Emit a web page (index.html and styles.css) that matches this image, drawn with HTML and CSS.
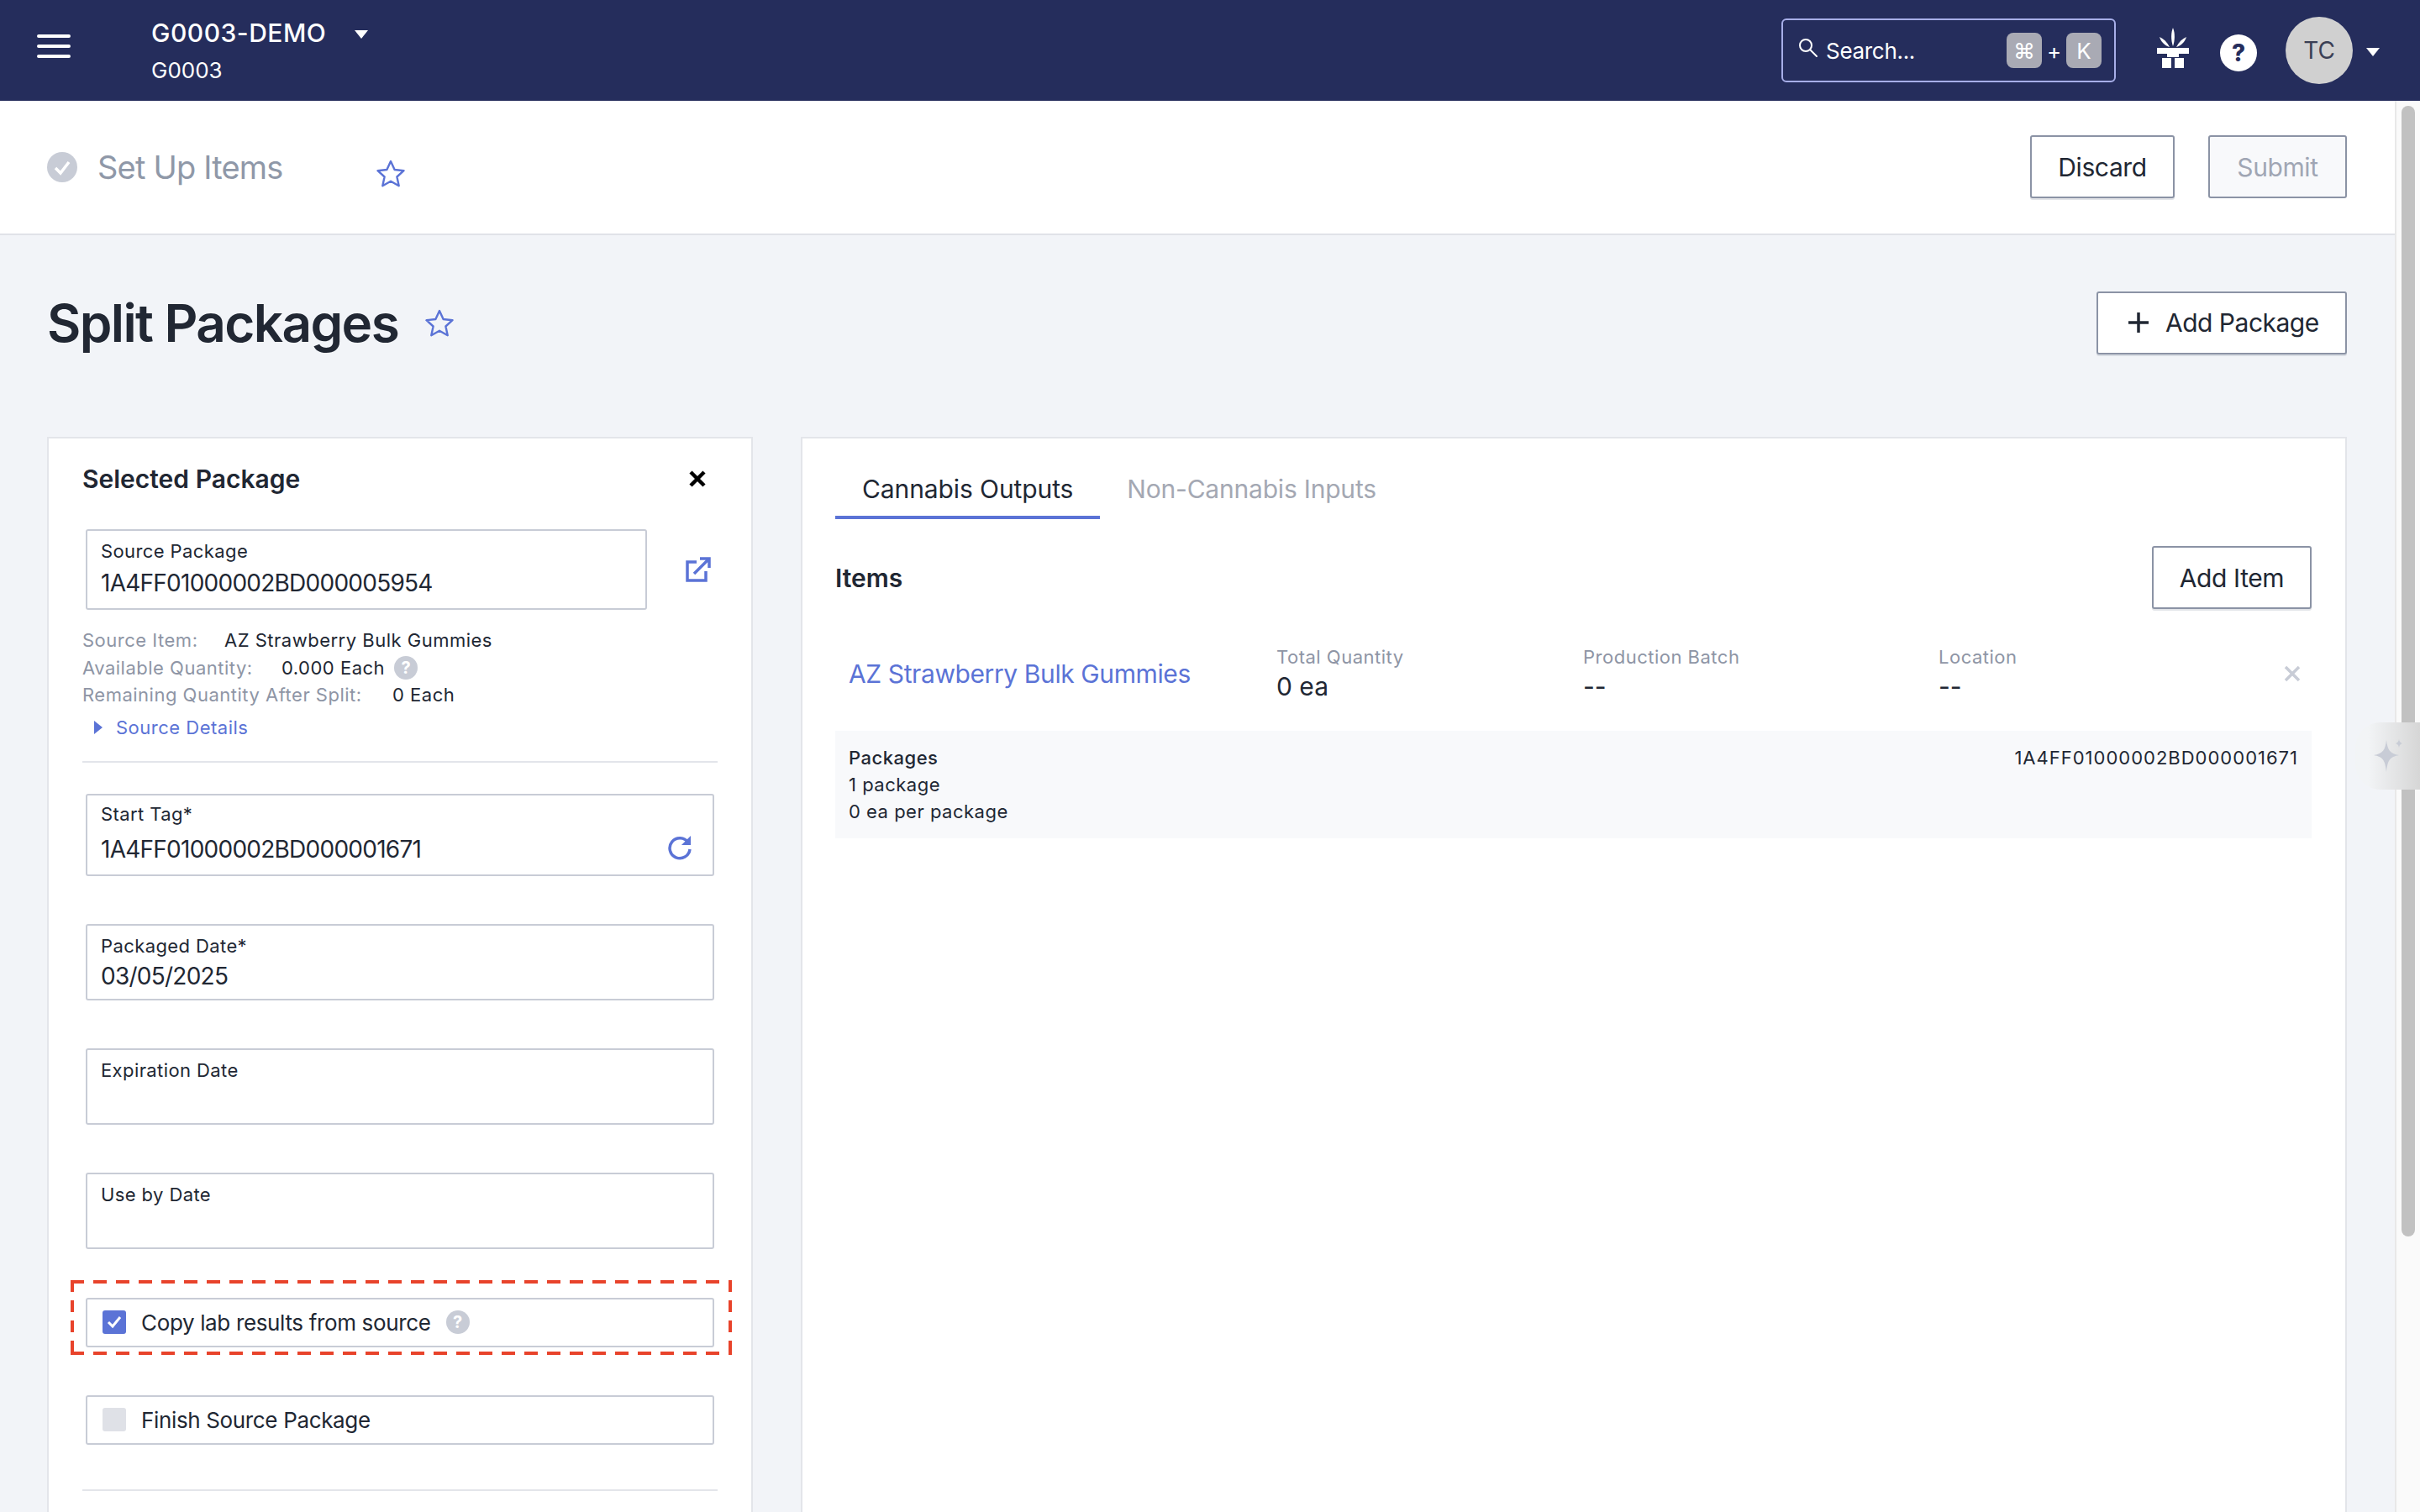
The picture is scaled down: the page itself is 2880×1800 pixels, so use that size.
FILE: index.html
```html
<!DOCTYPE html>
<html lang="en">
<head>
    <meta charset="UTF-8">
    <title>Split Packages</title>
    <link rel="stylesheet" href="styles.css">
</head>
<body>
    <header class="topbar">
        <svg class="menu-icon" width="40" height="28" viewBox="0 0 40 28"><path d="M2 2h36M2 14h36M2 26h36" stroke="#fff" stroke-width="4" stroke-linecap="round"/></svg>
        <div class="org">
            <div class="org-name">G0003-DEMO<span class="caret caret-org"></span></div>
            <div class="org-code">G0003</div>
        </div>
        <div class="search">
            <svg width="24" height="24" viewBox="0 0 24 24" fill="none" stroke="#fff" stroke-width="2"><circle cx="9" cy="9" r="7"/><path d="M14 14l8 8" stroke-linecap="round"/></svg>
            <span class="search-text">Search...</span>
            <span class="key">⌘</span>
            <span class="key-plus">+</span>
            <span class="key">K</span>
        </div>
        <svg class="gift-icon" width="38" height="48" viewBox="0 0 38 48" fill="#fff">
            <path d="M19 0c2.500 6 2.500 15 0 22c-2.500-7-2.500-16 0-22z"/>
            <path d="M3 11c5 2 9 6 12 12c-6-2-10-6-12-12z"/>
            <path d="M35 11c-5 2-9 6-12 12c6-2 10-6 12-12z"/>
            <path d="M0 24h38v7H26v4h-14v-4H0z"/>
            <path d="M6 36h11v12H6zM21 36h11v12H21z"/>
        </svg>
        <div class="help-top">?</div>
        <div class="avatar">TC</div>
        <span class="caret caret-user"></span>
    </header>

    <div class="layout">
        <div class="page">
            <div class="subhead">
                <svg width="36" height="36" viewBox="0 0 36 36"><circle cx="18" cy="18" r="18" fill="#c8ccd6"/><path d="M10 19l6 6 10-13" fill="none" stroke="#fff" stroke-width="3.500"/></svg>
                <span class="subhead-title">Set Up Items</span>
                <svg class="star star-sub" width="34" height="34" viewBox="0 0 34 34"><path d="M17 2l4.600 10 10.900 1.200-8.100 7.300 2.300 10.700L17 25.800l-9.700 5.400 2.300-10.700-8.100-7.300L12.400 12z" fill="none" stroke="#5b73d6" stroke-width="2.400" stroke-linejoin="round"/></svg>
                <button class="btn btn-discard">Discard</button>
                <button class="btn btn-disabled">Submit</button>
            </div>

            <div class="page-head">
                <h1>Split Packages</h1>
                <svg class="star star-head" width="34" height="34" viewBox="0 0 34 34"><path d="M17 2l4.600 10 10.900 1.200-8.100 7.300 2.300 10.700L17 25.800l-9.700 5.400 2.300-10.700-8.100-7.300L12.400 12z" fill="none" stroke="#5b73d6" stroke-width="2.400" stroke-linejoin="round"/></svg>
                <button class="btn btn-add">
                    <svg width="26" height="26" viewBox="0 0 26 26"><path d="M13 1v24M1 13h24" stroke="#212733" stroke-width="3.500"/></svg>
                    Add Package
                </button>
            </div>

            <div class="columns">
                <section class="panel panel-left">
                    <div class="panel-head">
                        <h2>Selected Package</h2>
                        <svg width="20" height="20" viewBox="0 0 20 20"><path d="M2 2l16 16M18 2L2 18" stroke="#000" stroke-width="4.500"/></svg>
                    </div>

                    <div class="source-row">
                        <div class="field field-source">
                            <label>Source Package</label>
                            <div class="value">1A4FF01000002BD000005954</div>
                        </div>
                        <svg class="ext-icon" width="30" height="30" viewBox="0 0 30 30" fill="none" stroke="#5b73d6" stroke-width="3.500"><path d="M13 6H2v22h22V17"/><path d="M10 20L27 3M17 2h11v11"/></svg>
                    </div>

                    <div class="info">
                        <div class="info-row"><span class="info-label info-item">Source Item:</span><span>AZ Strawberry Bulk Gummies</span></div>
                        <div class="info-row"><span class="info-label info-avail">Available Quantity:</span><span>0.000 Each</span><span class="help help-info">?</span></div>
                        <div class="info-row"><span class="info-label info-remain">Remaining Quantity After Split:</span><span>0 Each</span></div>
                    </div>
                    <div class="details"><span class="tri"></span>Source Details</div>
                    <hr class="rule">

                    <div class="field field-tag">
                        <label>Start Tag*</label>
                        <div class="value">1A4FF01000002BD000001671</div>
                        <svg class="refresh-icon" width="30" height="30" viewBox="0 0 30 30" fill="none" stroke="#5b73d6" stroke-width="3.500"><path d="M25 9a12 12 0 1 0 2 8"/><path d="M28 1v11H17z" stroke="none" fill="#5b73d6"/></svg>
                    </div>
                    <div class="field field-date">
                        <label>Packaged Date*</label>
                        <div class="value">03/05/2025</div>
                    </div>
                    <div class="field field-date">
                        <label>Expiration Date</label>
                    </div>
                    <div class="field field-date">
                        <label>Use by Date</label>
                    </div>

                    <div class="highlight">
                        <div class="field field-check">
                            <span class="checkbox checked">
                                <svg width="28" height="28" viewBox="0 0 28 28"><path d="M7 14l5 5 9-11" fill="none" stroke="#fff" stroke-width="3"/></svg>
                            </span>
                            <span>Copy lab results from source</span>
                            <span class="help help-check">?</span>
                        </div>
                    </div>
                    <div class="field field-check field-finish">
                        <span class="checkbox"></span>
                        <span>Finish Source Package</span>
                    </div>
                    <hr class="rule rule-end">
                </section>

                <section class="panel panel-right">
                    <div class="tabs">
                        <div class="tab active">Cannabis Outputs</div>
                        <div class="tab">Non-Cannabis Inputs</div>
                    </div>
                    <div class="items-head">
                        <h2>Items</h2>
                        <button class="btn btn-item">Add Item</button>
                    </div>
                    <div class="item-row">
                        <a class="item-link">AZ Strawberry Bulk Gummies</a>
                        <div class="stat"><div class="stat-label">Total Quantity</div><div class="stat-value">0 ea</div></div>
                        <div class="stat"><div class="stat-label">Production Batch</div><div class="stat-value">--</div></div>
                        <div class="stat"><div class="stat-label">Location</div><div class="stat-value">--</div></div>
                        <svg width="20" height="20" viewBox="0 0 20 20"><path d="M2 2l16 16M18 2L2 18" stroke="#c8ccd6" stroke-width="3.500"/></svg>
                    </div>
                    <div class="packages">
                        <div>
                            <div class="packages-title">Packages</div>
                            <div>1 package</div>
                            <div>0 ea per package</div>
                        </div>
                        <div class="package-tag">1A4FF01000002BD000001671</div>
                    </div>
                </section>
            </div>
        </div>
        <div class="scrollbar"><div class="thumb"></div></div>
    </div>

    <!-- floating assistant tab -->
    <div class="spark-tab">
        <svg width="44" height="40" viewBox="0 0 44 40" fill="#c8ccd6"><path d="M15 1c1.500 12 4 16 15 18c-11 2-13.500 6-15 20c-1.500-14-4-18-15-20c11-2 13.500-6 15-18z"/><path d="M30 0c.6 3 1.500 4 4 5c-2.500 1-3.400 2-4 5c-.6-3-1.500-4-4-5c2.500-1 3.400-2 4-5z"/></svg>
    </div>
</body>
</html>
```

FILE: styles.css
```css
* {
    box-sizing: border-box;
}

html, body {
    margin: 0;
    height: 1800px;
    overflow: hidden;
}

body {
    font-family: 'Inter', 'Liberation Sans', sans-serif;
    color: #212733;
    background-color: #f2f4f8;
    display: flex;
    flex-direction: column;
    position: relative;
}

h1, h2 {
    margin: 0;
}

/* top bar */
.topbar {
    height: 120px;
    flex: none;
    background-color: #252d5c;
    color: #fff;
    display: flex;
    align-items: center;
    padding: 0 48px 0 44px;
}

.menu-icon {
    margin-top: -10px;
}

.org {
    margin-left: 96px;
    margin-top: 2px;
    display: flex;
    flex-direction: column;
    gap: 8px;
}

.org-name {
    font-size: 30px;
    font-weight: 500;
    letter-spacing: 0.5px;
    line-height: 38px;
    display: flex;
    align-items: center;
}

.org-code {
    font-size: 26px;
    line-height: 36px;
}

.caret {
    width: 0;
    height: 0;
    border-left: 8px solid transparent;
    border-right: 8px solid transparent;
    border-top: 10px solid #fff;
}

.caret-org {
    margin-left: 34px;
    margin-top: 4px;
}

.caret-user {
    margin-left: 16px;
    margin-top: 3px;
}

.search {
    margin-left: auto;
    width: 398px;
    height: 76px;
    border: 2px solid #a7aee8;
    border-radius: 6px;
    display: flex;
    align-items: center;
    padding: 0 15px 0 18px;
}

.search svg {
    margin-top: -6px;
}

.search-text {
    font-size: 26px;
    letter-spacing: -0.3px;
    margin-left: 9px;
    margin-right: auto;
}

.key {
    width: 42px;
    height: 42px;
    background-color: #a9aab4;
    border-radius: 8px;
    display: flex;
    align-items: center;
    justify-content: center;
    font-size: 26px;
}

.key-plus {
    font-size: 26px;
    width: 29px;
    text-align: center;
}

.gift-icon {
    margin-left: 49px;
    margin-top: -6px;
}

.help-top {
    width: 44px;
    height: 44px;
    margin-left: 37px;
    margin-top: 6px;
    border-radius: 50%;
    background-color: #fff;
    color: #252d5c;
    font-size: 28px;
    font-weight: 800;
    display: flex;
    align-items: center;
    justify-content: center;
}

.avatar {
    width: 80px;
    height: 80px;
    margin-left: 34px;
    border-radius: 50%;
    background-color: #d0d0d0;
    color: #3a3f55;
    font-size: 28px;
    display: flex;
    align-items: center;
    justify-content: center;
}

/* page */
.layout {
    flex: 1;
    display: flex;
    min-height: 0;
}

.page {
    width: 2850px;
    display: flex;
    flex-direction: column;
    min-height: 0;
}

.scrollbar {
    width: 30px;
    background-color: #fafafa;
    border-left: 2px solid #e8e8e8;
    padding: 6px 6px 0;
}

.thumb {
    height: 1346px;
    background-color: #c1c1c1;
    border-radius: 8px;
}

.subhead {
    height: 160px;
    flex: none;
    background-color: #fff;
    border-bottom: 2px solid #e0e2e8;
    display: flex;
    align-items: center;
    padding: 0 57px 0 56px;
}

.subhead-title {
    font-size: 38px;
    letter-spacing: -0.8px;
    color: #8f98a8;
    margin-left: 24px;
}

.star-sub {
    margin-left: 111px;
    margin-top: 16px;
}

.btn {
    font-family: inherit;
    font-size: 30px;
    letter-spacing: -0.4px;
    color: #212733;
    height: 75px;
    background-color: #fff;
    border: 2px solid #8b93a5;
    border-radius: 3px;
    box-shadow: 0 2px 0 rgba(139, 147, 165, 0.25);
    padding: 0;
}

.btn-discard {
    width: 172px;
    margin-left: auto;
    margin-top: -1px;
}

.btn-disabled {
    width: 165px;
    margin-left: 40px;
    margin-top: -1px;
    background-color: #f8f9fb;
    color: #a0a6b4;
    box-shadow: none;
}

.page-head {
    height: 240px;
    flex: none;
    display: flex;
    align-items: center;
    padding: 0 57px 32px 56px;
}

h1 {
    font-size: 62px;
    font-weight: 600;
    letter-spacing: -1.6px;
    line-height: 80px;
    margin-top: 2px;
}

.star-head {
    margin-left: 32px;
    margin-top: 2px;
}

.btn-add {
    width: 298px;
    margin-left: auto;
    display: flex;
    align-items: center;
    gap: 19px;
    padding-left: 35px;
    letter-spacing: -0.5px;
}

.columns {
    flex: 1;
    display: flex;
    gap: 57px;
    padding: 0 57px 0 56px;
    min-height: 0;
}

.panel {
    background-color: #fff;
    border: 2px solid #e3e5ea;
    border-bottom: none;
}

.panel-left {
    width: 840px;
    flex: none;
    padding: 0 40px;
}

.panel-right {
    flex: 1;
    padding: 40px 40px 0 39px;
}

.panel-head {
    height: 96px;
    display: flex;
    align-items: center;
    justify-content: space-between;
    padding-right: 14px;
}

h2 {
    font-size: 30px;
    font-weight: 600;
}

/* form */
.field {
    margin: 0 4px;
    border: 2px solid #c8ccd6;
    border-radius: 3px;
    padding: 0 16px;
    position: relative;
}

.field label {
    display: block;
    font-size: 22px;
    letter-spacing: 0.4px;
    line-height: 30px;
}

.field .value {
    font-size: 28px;
    letter-spacing: -0.75px;
    line-height: 36px;
}

.source-row {
    margin-top: 12px;
    display: flex;
    align-items: center;
}

.field-source {
    width: 668px;
    height: 96px;
    padding-top: 9px;
}

.field-source .value {
    margin-top: 5px;
}

.ext-icon {
    margin-left: 42px;
}

.info {
    margin-top: 20px;
    font-size: 22px;
    letter-spacing: 0.5px;
}

.info-row {
    height: 32.500px;
    display: flex;
    align-items: center;
}

.info-label {
    color: #8e95a5;
}

.info-item {
    width: 169px;
}

.info-avail {
    width: 237px;
}

.info-remain {
    width: 369px;
}

.help {
    width: 28px;
    height: 28px;
    border-radius: 50%;
    background-color: #c8ccd6;
    color: #fff;
    font-size: 20px;
    font-weight: 700;
    letter-spacing: 0;
    display: flex;
    align-items: center;
    justify-content: center;
}

.help-info {
    margin-left: 11px;
}

.details {
    margin-top: 6px;
    padding-left: 14px;
    font-size: 22px;
    letter-spacing: 0.5px;
    line-height: 32px;
    color: #5b73d6;
    display: flex;
    align-items: center;
}

.tri {
    width: 0;
    height: 0;
    border-top: 8px solid transparent;
    border-bottom: 8px solid transparent;
    border-left: 10px solid #5b73d6;
    margin-right: 16px;
}

.rule {
    margin: 24px 0 0;
    border: none;
    height: 2px;
    background-color: #e3e5ea;
}

.rule-end {
    margin-top: 53px;
}

.field-tag {
    margin-top: 37px;
    height: 98px;
    padding-top: 7px;
}

.field-tag .value {
    margin-top: 9px;
}

.refresh-icon {
    position: absolute;
    right: 24px;
    top: 47px;
}

.field-date {
    margin-top: 57px;
    height: 91px;
    padding-top: 9px;
}

.field-date .value {
    margin-top: 3px;
}

.field-check {
    height: 59px;
    padding: 0 0 0 18px;
    display: flex;
    align-items: center;
    font-size: 26px;
    letter-spacing: -0.35px;
}

.checkbox {
    width: 28px;
    height: 28px;
    border-radius: 3px;
    background-color: #dfe1e7;
    margin-right: 18px;
    flex: none;
}

.checkbox.checked {
    background-color: #5b73d6;
}

.help-check {
    margin-left: 18px;
}

/* red dashed marker, dash lengths taken from the annotation in the shot */
.highlight {
    margin: 37px -17px 0 -14px;
    padding: 21px 21px 9px 18px;
    background:
        repeating-linear-gradient(to right, #e8432b 0 16px, transparent 16px 27px) top left / 100% 4px no-repeat,
        repeating-linear-gradient(to right, #e8432b 0 16px, transparent 16px 27px) bottom left / 100% 4px no-repeat,
        repeating-linear-gradient(to bottom, #e8432b 0 14px, transparent 14px 24px) top left / 4px 100% no-repeat,
        repeating-linear-gradient(to bottom, #e8432b 0 14px, transparent 14px 24px) top right / 4px 100% no-repeat;
}

.highlight .field-check {
    margin: 0;
}

.field-finish {
    margin-top: 48px;
}

/* right panel */
.tabs {
    display: flex;
}

.tab {
    font-size: 30px;
    letter-spacing: -0.1px;
    line-height: 40px;
    color: #a4a8b3;
    padding: 0 32px 12px;
}

.tab + .tab {
    padding-left: 32px;
    letter-spacing: -0.2px;
}

.tab.active {
    color: #212733;
    border-bottom: 4px solid #5b73d6;
}

.items-head {
    margin-top: 32px;
    display: flex;
    align-items: center;
    justify-content: space-between;
}

.btn-item {
    width: 190px;
}

.item-row {
    height: 145px;
    padding: 9px 13px 0 16px;
    display: grid;
    grid-template-columns: 509px 365px 423px 1fr 20px;
    align-items: center;
}

.item-link {
    font-size: 30px;
    letter-spacing: -0.4px;
    color: #5b73d6;
}

.stat-label {
    font-size: 22px;
    line-height: 30px;
    letter-spacing: 0.5px;
    color: #8e95a5;
}

.stat-value {
    font-size: 30px;
    line-height: 40px;
}

.packages {
    height: 128px;
    background-color: #f8f9fb;
    padding: 16px 16px 0 16px;
    display: flex;
    justify-content: space-between;
    font-size: 22px;
    line-height: 32px;
    letter-spacing: 0.5px;
}

.packages-title {
    font-weight: 500;
}

.package-tag {
    letter-spacing: 1px;
}

/* assistant tab over the scrollbar */
.spark-tab {
    position: absolute;
    left: 2803px;
    top: 860px;
    width: 77px;
    height: 80px;
    border-radius: 30px 0 0 30px;
    background: linear-gradient(to right, #f2f4f6 20%, #d6d6d6 100%);
    display: flex;
    align-items: center;
    padding-left: 22px;
}
```
